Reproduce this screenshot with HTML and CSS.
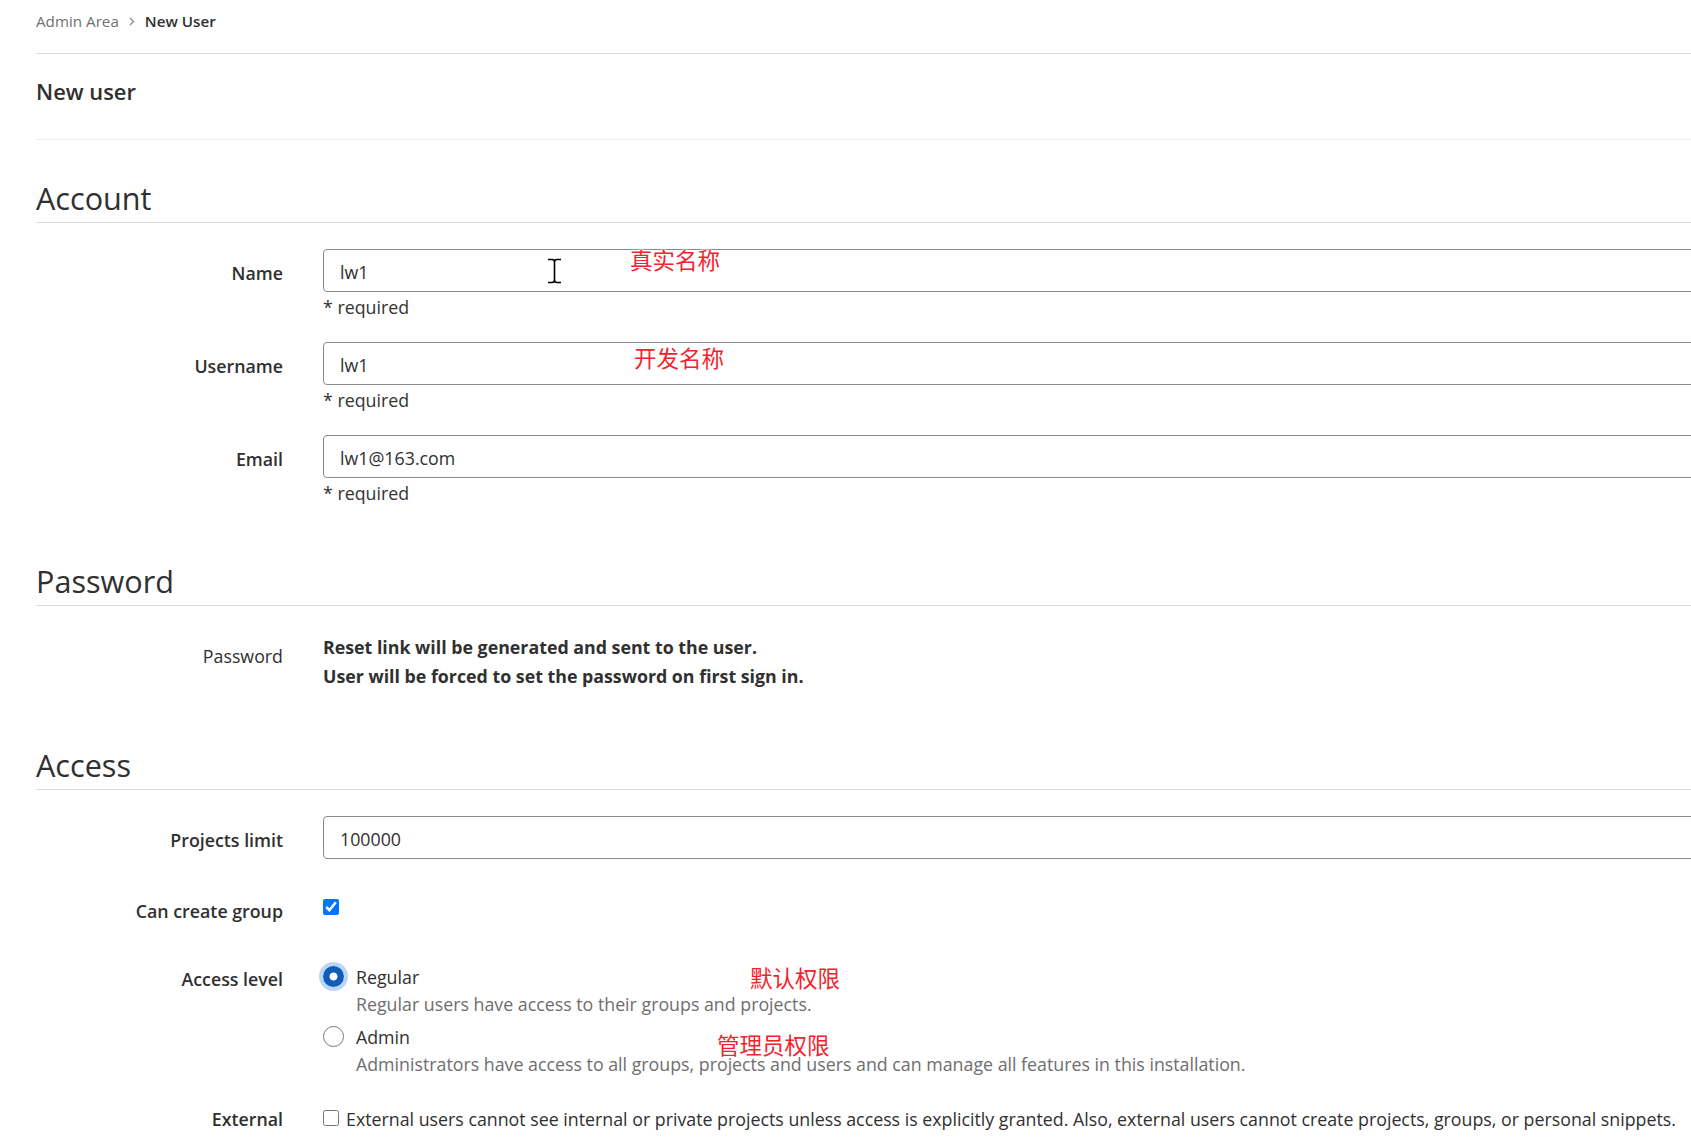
FILE: index.html
```html
<!DOCTYPE html>
<html lang="en">
<head>
<meta charset="utf-8">
<title>New User · Admin Area</title>
<link rel="stylesheet" href="styles.css">
</head>
<body>
<div class="page">
  <nav class="breadcrumbs">
    <span class="crumb">Admin Area</span>
    <svg class="chev" width="6" height="9" viewBox="0 0 6 9"><path d="M1 1l3.5 3.5L1 8" fill="none" stroke="#8a8a8a" stroke-width="1.3"/></svg>
    <span class="crumb current">New User</span>
  </nav>

  <h3 class="page-title">New user</h3>

  <form class="user-form">
    <section class="section">
      <h4 class="section-heading">Account</h4>
      <div class="row">
        <label class="row-label">Name</label>
        <div class="row-field">
          <input class="text-input" type="text" value="lw1">
          <div class="help">* required</div>
        </div>
      </div>
      <div class="row">
        <label class="row-label">Username</label>
        <div class="row-field">
          <input class="text-input" type="text" value="lw1">
          <div class="help">* required</div>
        </div>
      </div>
      <div class="row">
        <label class="row-label">Email</label>
        <div class="row-field">
          <input class="text-input" type="text" value="lw1@163.com">
          <div class="help">* required</div>
        </div>
      </div>
    </section>

    <section class="section">
      <h4 class="section-heading">Password</h4>
      <div class="row">
        <label class="row-label plain">Password</label>
        <div class="row-field static-text">
          <strong>Reset link will be generated and sent to the user.</strong><br>
          <strong>User will be forced to set the password on first sign in.</strong>
        </div>
      </div>
    </section>

    <section class="section section-access">
      <h4 class="section-heading">Access</h4>
      <div class="row">
        <label class="row-label">Projects limit</label>
        <div class="row-field">
          <input class="text-input" type="text" value="100000">
        </div>
      </div>
      <div class="row">
        <label class="row-label label-check">Can create group</label>
        <div class="row-field check-field">
          <input class="check" type="checkbox" checked>
        </div>
      </div>
      <div class="row row-access">
        <label class="row-label">Access level</label>
        <div class="row-field radio-group">
          <div class="option">
            <div class="option-line"><span class="radio checked"></span><span>Regular</span></div>
            <div class="option-desc">Regular users have access to their groups and projects.</div>
          </div>
          <div class="option">
            <div class="option-line"><span class="radio"></span><span>Admin</span></div>
            <div class="option-desc">Administrators have access to all groups, projects and users and can manage all features in this installation.</div>
          </div>
        </div>
      </div>
      <div class="row">
        <label class="row-label">External</label>
        <div class="row-field external-field">
          <input class="check" type="checkbox">
          <span>External users cannot see internal or private projects unless access is explicitly granted. Also, external users cannot create projects, groups, or personal snippets.</span>
        </div>
      </div>
    </section>
  </form>

  <div class="note note-name">真实名称</div>
  <div class="note note-username">开发名称</div>
  <div class="note note-regular">默认权限</div>
  <div class="note note-admin">管理员权限</div>

  <svg class="ibeam" width="15" height="26" viewBox="0 0 15 26"><path d="M1 1.5h4q2.5 0 2.5 2.5v18q0 2.5-2.5 2.5H1M14 1.5h-4q-2.5 0-2.5 2.5v18q0 2.5 2.5 2.5h4" fill="none" stroke="#fff" stroke-width="3.5"/><path d="M1 1.5h4q2.5 0 2.5 2.5v18q0 2.5-2.5 2.5H1M14 1.5h-4q-2.5 0-2.5 2.5v18q0 2.5 2.5 2.5h4" fill="none" stroke="#000" stroke-width="1.6"/></svg>
</div>
</body>
</html>
```

FILE: styles.css
```css
html, body {
  margin: 0;
  padding: 0;
  background: #fff;
  overflow: hidden;
}

body {
  font-family: "Open Sans", "Noto Sans", sans-serif;
  font-size: 17.8px;
  line-height: 24px;
  color: #303030;
}

.page {
  position: relative;
  width: 1900px;
  padding-left: 36px;
  min-height: 1141px;
}

/* breadcrumbs */
.breadcrumbs {
  display: flex;
  align-items: center;
  gap: 10px;
  padding: 9px 0 20px;
  font-size: 15.2px;
  line-height: 24px;
  border-bottom: 1px solid #dbdbdb;
}

.crumb {
  color: #707070;
}

.crumb.current {
  color: #303030;
  font-weight: 600;
}

.chev {
  display: block;
}

/* title */
.page-title {
  margin: 0;
  padding: 23px 0 32px;
  font-size: 21.9px;
  line-height: 30px;
  font-weight: 600;
  border-bottom: 1px solid #ececec;
}

.user-form {
  margin: 0;
}

.section {
  display: flow-root;
  margin-top: 33px;
}

.section:first-child {
  margin-top: 38px;
}

.section.section-access {
  margin-top: 31px;
}

.section-heading {
  margin: 0 0 26px;
  padding-bottom: 4px;
  font-size: 30.6px;
  line-height: 40px;
  font-weight: 400;
  border-bottom: 1px solid #dbdbdb;
}

/* rows */
.row {
  display: grid;
  grid-template-columns: 247px 1fr;
  column-gap: 40px;
  margin-bottom: 24px;
}

.row-label {
  text-align: right;
  font-weight: 600;
  padding-top: 11.5px;
  line-height: 24px;
}

.row-label.plain {
  font-weight: 400;
}

.row-label.label-check {
  padding-top: 15.5px;
}

.row-field {
  min-width: 0;
}

.text-input {
  display: block;
  box-sizing: border-box;
  width: 100%;
  height: 43px;
  margin: 0;
  padding: 2px 16px 0;
  border: 1px solid #8a898e;
  border-radius: 4px;
  font-family: inherit;
  font-size: 17.8px;
  color: #303030;
  background: #fff;
  outline: none;
}

.help {
  margin-top: 3px;
  margin-bottom: -1px;
  line-height: 24px;
  color: #333;
}

.static-text {
  padding-top: 1px;
  line-height: 28.5px;
}

.static-text strong {
  font-weight: 700;
}

.check {
  display: block;
  width: 16px;
  height: 16px;
  margin: 0;
  accent-color: #0075ff;
}

.check-field {
  box-sizing: border-box;
  height: 48px;
  padding-top: 16px;
}

/* radios */
.section .row.row-access {
  margin-bottom: 18px;
}

.radio-group {
  padding-top: 9px;
  line-height: 26.5px;
}

.option + .option {
  margin-top: 7px;
}

.option-line {
  display: flex;
  align-items: center;
  gap: 12px;
}

.radio {
  box-sizing: border-box;
  width: 21px;
  height: 21px;
  margin-top: -2px;
  border-radius: 50%;
  border: 1px solid #767676;
  background: #fff;
  flex: none;
}

.radio.checked {
  border: none;
  background: radial-gradient(circle, #fff 0 3.6px, #0f5db7 4.4px);
  box-shadow: 0 0 0 4px #b9d6f6;
}

.option-desc {
  padding-left: 33px;
  color: #6e6e6e;
}

.external-field {
  display: flex;
  align-items: flex-start;
  gap: 7px;
  padding-top: 12px;
  line-height: 24px;
}

.external-field .check {
  margin-top: 2.5px;
  flex: none;
}

/* annotations */
.note {
  position: absolute;
  font-family: "Noto Sans CJK SC", "Noto Sans", sans-serif;
  font-size: 22.5px;
  line-height: 23px;
  color: #f5222d;
  white-space: nowrap;
  text-shadow: 0 0 2px #fff, 0 0 2px #fff, 0 0 3px #fff;
}

.note-name {
  left: 630px;
  top: 248px;
}

.note-username {
  left: 634px;
  top: 346px;
}

.note-regular {
  left: 750px;
  top: 966px;
}

.note-admin {
  left: 717px;
  top: 1033px;
}

.ibeam {
  position: absolute;
  left: 547px;
  top: 258px;
}
```
